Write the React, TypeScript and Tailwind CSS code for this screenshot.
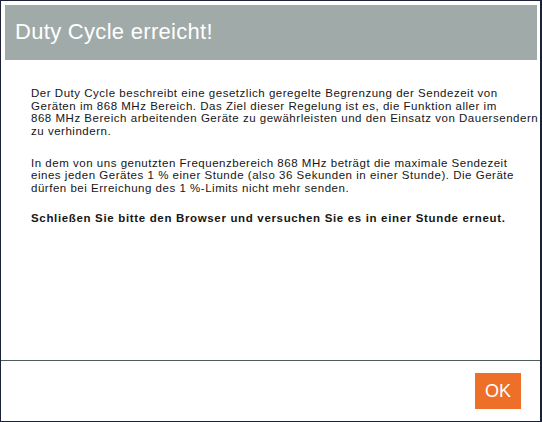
import React from 'react';

const App: React.FC = () => {
    return (
        <div className="w-[542px] h-[422px] bg-white border-t border-l border-b border-r-2 border-[#1b2236] pt-1 pl-1 pr-[3px] flex flex-col font-['Tahoma','Liberation_Sans',sans-serif]">
            {/* Header */}
            <div className="h-[55px] shrink-0 bg-[#a0aaa8] flex items-center pl-[10px] pb-[2px]">
                <h1 className="text-[22px] tracking-[0.3px] leading-none text-white">Duty Cycle erreicht!</h1>
            </div>

            {/* Body */}
            <div className="flex-1 pl-[26px] pt-[27px] text-[11.5px] tracking-[0.52px] leading-[12.67px] text-[#161616] whitespace-nowrap">
                <p>
                    Der Duty Cycle beschreibt eine gesetzlich geregelte Begrenzung der Sendezeit von<br />
                    Geräten im 868 MHz Bereich. Das Ziel dieser Regelung ist es, die Funktion aller im<br />
                    868 MHz Bereich arbeitenden Geräte zu gewährleisten und den Einsatz von Dauersendern<br />
                    zu verhindern.
                </p>
                <p className="mt-[19px]">
                    In dem von uns genutzten Frequenzbereich 868 MHz beträgt die maximale Sendezeit<br />
                    eines jeden Gerätes 1 % einer Stunde (also 36 Sekunden in einer Stunde). Die Geräte<br />
                    dürfen bei Erreichung des 1 %-Limits nicht mehr senden.
                </p>
                <p className="mt-[17px] font-bold tracking-[0.66px]">
                    Schließen Sie bitte den Browser und versuchen Sie es in einer Stunde erneut.
                </p>
            </div>

            {/* Footer */}
            <div className="-ml-1 -mr-[3px] h-[61px] shrink-0 border-t border-[#4d5d58] flex items-center justify-end pr-[19px]">
                <button className="w-[46px] h-[36px] bg-[#ee6f27] text-white text-[18px] leading-none">OK</button>
            </div>
        </div>
    );
};

export default App;
